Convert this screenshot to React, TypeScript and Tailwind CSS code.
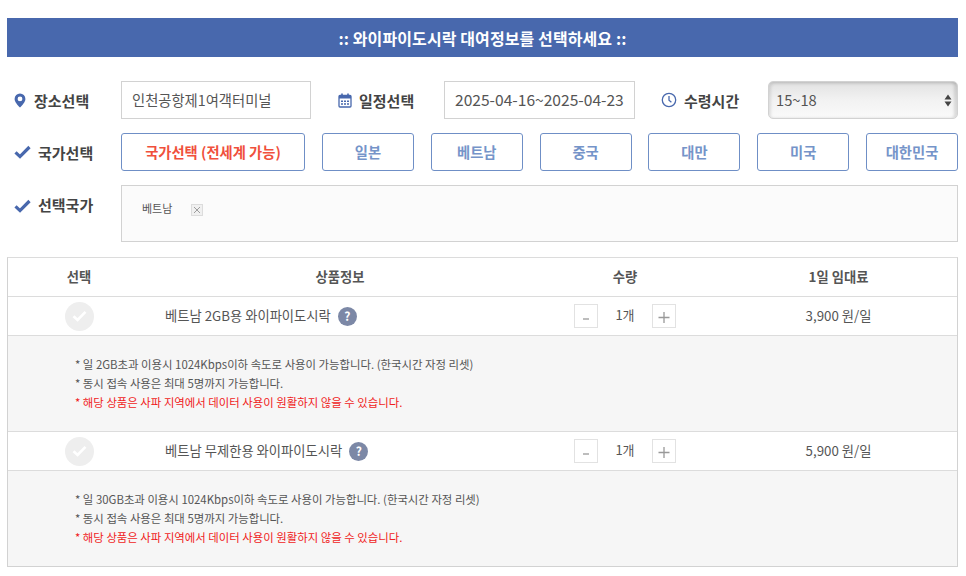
import React from "react";

const font = { fontFamily: '"Noto Sans CJK KR", "Noto Sans", sans-serif' };

const Check = () => (
  <svg width="17" height="14" viewBox="0 0 17 14" className="shrink-0">
    <path d="M1.500 7.400 L6 11.600 L15.500 2" fill="none" stroke="#4868ad" strokeWidth="3.200" />
  </svg>
);

const Pin = () => (
  <svg width="12" height="15" viewBox="0 0 12 15" className="shrink-0">
    <path fillRule="evenodd" d="M6 0.500a5.400 5.400 0 0 1 5.400 5.400c0 3-3.200 6.400-5.400 8.600C3.800 12.300 0.600 8.900 0.600 5.900A5.400 5.400 0 0 1 6 0.500Zm0 3a2.400 2.400 0 1 0 0 4.800a2.400 2.400 0 0 0 0-4.800Z" fill="#4868ad" />
  </svg>
);

const Cal = () => (
  <svg width="14" height="15" viewBox="0 0 14 15" className="shrink-0">
    <rect x="1" y="2.500" width="12" height="11.500" rx="1" fill="none" stroke="#4868ad" strokeWidth="1.300" />
    <rect x="1" y="2.500" width="12" height="3" fill="#4868ad" />
    <rect x="3.200" y="0.500" width="1.600" height="3" fill="#4868ad" />
    <rect x="9.200" y="0.500" width="1.600" height="3" fill="#4868ad" />
    <path d="M3 7.500h2v1.500H3zM6 7.500h2v1.500H6zM9 7.500h2v1.500H9zM3 10.300h2v1.500H3zM6 10.300h2v1.500H6zM9 10.300h2v1.500H9z" fill="#4868ad" />
  </svg>
);

const Clock = () => (
  <svg width="16" height="16" viewBox="0 0 16 16" className="shrink-0">
    <circle cx="8" cy="8" r="6.700" fill="none" stroke="#4868ad" strokeWidth="1.300" />
    <path d="M8 4v4.300l2.400 2" fill="none" stroke="#4868ad" strokeWidth="1.300" />
  </svg>
);

const QtyBtn = ({ c }: { c: string }) => (
  <div className="w-6 h-6 border border-[#e2e2e2] flex items-center justify-center bg-white">
    {c === "-" ? (
      <svg width="10" height="10" viewBox="0 0 10 10"><path d="M2 8h6" stroke="#999" strokeWidth="1.300" /></svg>
    ) : (
      <svg width="14" height="14" viewBox="0 0 14 14"><path d="M1.500 8.500h11M7 3v11" stroke="#999" strokeWidth="1.300" /></svg>
    )}
  </div>
);

const ProductRow = ({ name, price, first }: { name: string; price: string; first: string }) => (
  <>
    <div className="grid grid-cols-[142px_380px_190px_1fr] h-[39px] items-center border-t border-[#dcdcdc] bg-white text-[13.3px] text-[#555]">
      <div className="flex justify-center">
        <div className="w-[29px] h-[29px] rounded-full bg-[#eeeeee] flex items-center justify-center">
          <svg width="15" height="12" viewBox="0 0 15 12"><path d="M1.500 6.200 L5.600 10 L13.500 1.800" fill="none" stroke="#fff" strokeWidth="2.600" /></svg>
        </div>
      </div>
      <div className="flex items-center pl-[15px] gap-[7px]">
        <span>{name}</span>
        <span className="w-[19px] h-[19px] rounded-full bg-[#7c88a6] text-white text-[12px] font-bold flex items-center justify-center">?</span>
      </div>
      <div className="flex items-center justify-center gap-[17px]">
        <QtyBtn c="-" />
        <span className="text-[13px] -translate-y-px">1개</span>
        <QtyBtn c="+" />
      </div>
      <div className="text-center">{price}</div>
    </div>
    <div className="h-[96px] border-t border-[#dcdcdc] bg-[#f6f6f6] pt-[19px] pl-[67px] text-[11.4px] leading-[19px] text-[#555]">
      <p>{first}</p>
      <p>* 동시 접속 사용은 최대 5명까지 가능합니다.</p>
      <p className="text-[#f01c1c]">* 해당 상품은 사파 지역에서 데이터 사용이 원활하지 않을 수 있습니다.</p>
    </div>
  </>
);

const inputCls = "h-[38px] border border-[#d2d2d2] flex items-center px-[10px] text-[#555] bg-white";
const labelCls = "text-[15px] font-bold text-[#444] translate-y-px";

export default function App() {
  const countries = ["일본", "베트남", "중국", "대만", "미국", "대한민국"];
  return (
    <div className="w-[966px] h-[576px] bg-white overflow-hidden pt-[18px] pl-[7px] pr-[8px]" style={font}>
      <div className="h-[39px] bg-[#4868ad] flex items-center justify-center text-white text-[16px] tracking-[0.1px] font-bold">
        :: 와이파이도시락 대여정보를 선택하세요 ::
      </div>

      <div className="mt-[24px] flex items-center h-[38px]">
        <div className="w-[114px] flex items-center pl-[7px] gap-[8px]">
          <Pin />
          <span className={labelCls}>장소선택</span>
        </div>
        <div className={`${inputCls} w-[190px] text-[14.3px]`}>인천공항제1여객터미널</div>
        <div className="w-[133px] flex items-center pl-[27px] gap-[7px]">
          <Cal />
          <span className={labelCls}>일정선택</span>
        </div>
        <div className={`${inputCls} w-[191px] text-[15.6px]`}>2025-04-16~2025-04-23</div>
        <div className="w-[133px] flex items-center pl-[26px] gap-[7px]">
          <Clock />
          <span className={labelCls}>수령시간</span>
        </div>
        <div className="relative w-[190px] h-[38px] rounded-[5px] border border-[#d2d2d2] bg-gradient-to-b from-[#e2e2e2] via-[#f2f2f2] to-[#fafafa] shadow-[inset_2px_2px_3px_rgba(0,0,0,0.1),inset_-3px_0_3px_rgba(0,0,0,0.12)] flex items-center pl-[7px] text-[14.7px] text-[#555]">
          15~18
          <svg width="8" height="13" viewBox="0 0 8 13" className="absolute right-[5px] top-[12px]">
            <path d="M4 0.500 L7.500 5.500 H0.500Z M4 12.500 L7.500 7.500 H0.500Z" fill="#444" />
          </svg>
        </div>
      </div>

      <div className="mt-[14px] flex items-center h-[38px]">
        <div className="w-[114px] flex items-center pl-[7px] gap-[7px]">
          <Check />
          <span className={labelCls}>국가선택</span>
        </div>
        <div className="w-[184px] h-[38px] rounded-[3px] border border-[#6f8fc6] flex items-center justify-center text-[14.3px] font-bold text-[#f0503c]">
          국가선택 (전세계 가능)
        </div>
        <div className="flex-1 flex justify-between pl-[17px]">
          {countries.map((c) => (
            <div key={c} className="w-[92px] h-[38px] rounded-[3px] border border-[#6f8fc6] flex items-center justify-center text-[14.3px] font-bold text-[#7594c9]">
              {c}
            </div>
          ))}
        </div>
      </div>

      <div className="mt-[14px] flex h-[57px]">
        <div className="w-[114px] flex items-start pl-[7px] gap-[7px] pt-[8px]">
          <span className="mt-[6px]"><Check /></span>
          <span className={labelCls}>선택국가</span>
        </div>
        <div className="flex-1 border border-[#d2d2d2] bg-[#fbfbfb] flex items-start pl-[20px] pt-[13px] text-[11px] text-[#555]">
          <span className="leading-[18px]">베트남</span>
          <span className="ml-[19px] mt-[5px] w-[12px] h-[12px] border border-[#dcdcdc] bg-[#f0f0f0] flex items-center justify-center">
            <svg width="8" height="8" viewBox="0 0 8 8"><path d="M1 1l6 6M7 1l-6 6" stroke="#888" strokeWidth="0.800" /></svg>
          </span>
        </div>
      </div>

      <div className="mt-[15px] border border-[#d2d2d2] border-t-[#dcdcdc]">
        <div className="grid grid-cols-[142px_380px_190px_1fr] h-[38px] items-center text-center text-[13.3px] font-bold text-[#555]">
          <div>선택</div>
          <div>상품정보</div>
          <div>수량</div>
          <div>1일 임대료</div>
        </div>
        <ProductRow name="베트남 2GB용 와이파이도시락" price="3,900 원/일" first="* 일 2GB초과 이용시 1024Kbps이하 속도로 사용이 가능합니다. (한국시간 자정 리셋)" />
        <ProductRow name="베트남 무제한용 와이파이도시락" price="5,900 원/일" first="* 일 30GB초과 이용시 1024Kbps이하 속도로 사용이 가능합니다. (한국시간 자정 리셋)" />
      </div>
    </div>
  );
}
